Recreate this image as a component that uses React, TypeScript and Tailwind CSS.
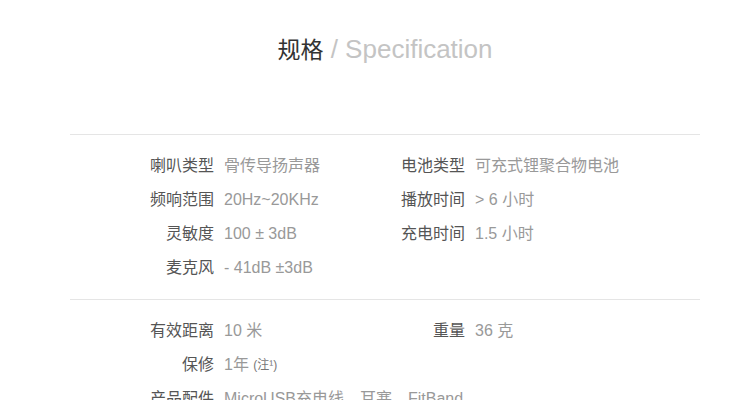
const font = { fontFamily: '"Liberation Sans", "Noto Sans CJK SC", sans-serif' };

type Row = [string, React.ReactNode, string?, React.ReactNode?];

const groupA: Row[] = [
	['喇叭类型', '骨传导扬声器', '电池类型', '可充式锂聚合物电池'],
	['频响范围', '20Hz~20KHz', '播放时间', '> 6 小时'],
	['灵敏度', '100 ± 3dB', '充电时间', '1.5 小时'],
	['麦克风', '- 41dB ±3dB'],
];

const groupB: Row[] = [
	['有效距离', '10 米', '重量', '36 克'],
	[
		'保修',
		<>
			1年 <span className="align-top text-[12px] text-[#777]">(注¹)</span>
		</>,
	],
	['产品配件', 'MicroUSB充电线、耳塞、FitBand'],
];

const SpecGroup = ({ rows }: { rows: Row[] }) => (
	<div className="grid grid-cols-[144px_167px_64px_1fr] gap-x-[10px] py-[14px]">
		{rows.map(([l1, v1, l2, v2], i) => (
			<div key={i} className="contents">
				<div className="h-[34px] text-right leading-[34px] text-[#555]">{l1}</div>
				<div className="h-[34px] leading-[34px] whitespace-nowrap text-[#999]">{v1}</div>
				<div className="h-[34px] text-right leading-[34px] text-[#555]">{l2}</div>
				<div className="h-[34px] leading-[34px] whitespace-nowrap text-[#999]">{v2}</div>
			</div>
		))}
	</div>
);

export default function App() {
	return (
		<div className="h-[400px] overflow-hidden bg-white text-[16px]" style={font}>
			<h1 className="h-[65px] pt-[33px] pl-[16px] text-center leading-[32px]">
				<span className="text-[23px] text-[#333]">规格</span>
				<span className="text-[26px] text-[#c4c4c4]"> / Specification</span>
			</h1>
			<div className="mt-[69px] ml-[70px] w-[630px]">
				<div className="border-t border-[#e5e5e5]" />
				<SpecGroup rows={groupA} />
				<div className="border-t border-[#e5e5e5]" />
				<SpecGroup rows={groupB} />
			</div>
		</div>
	);
}
